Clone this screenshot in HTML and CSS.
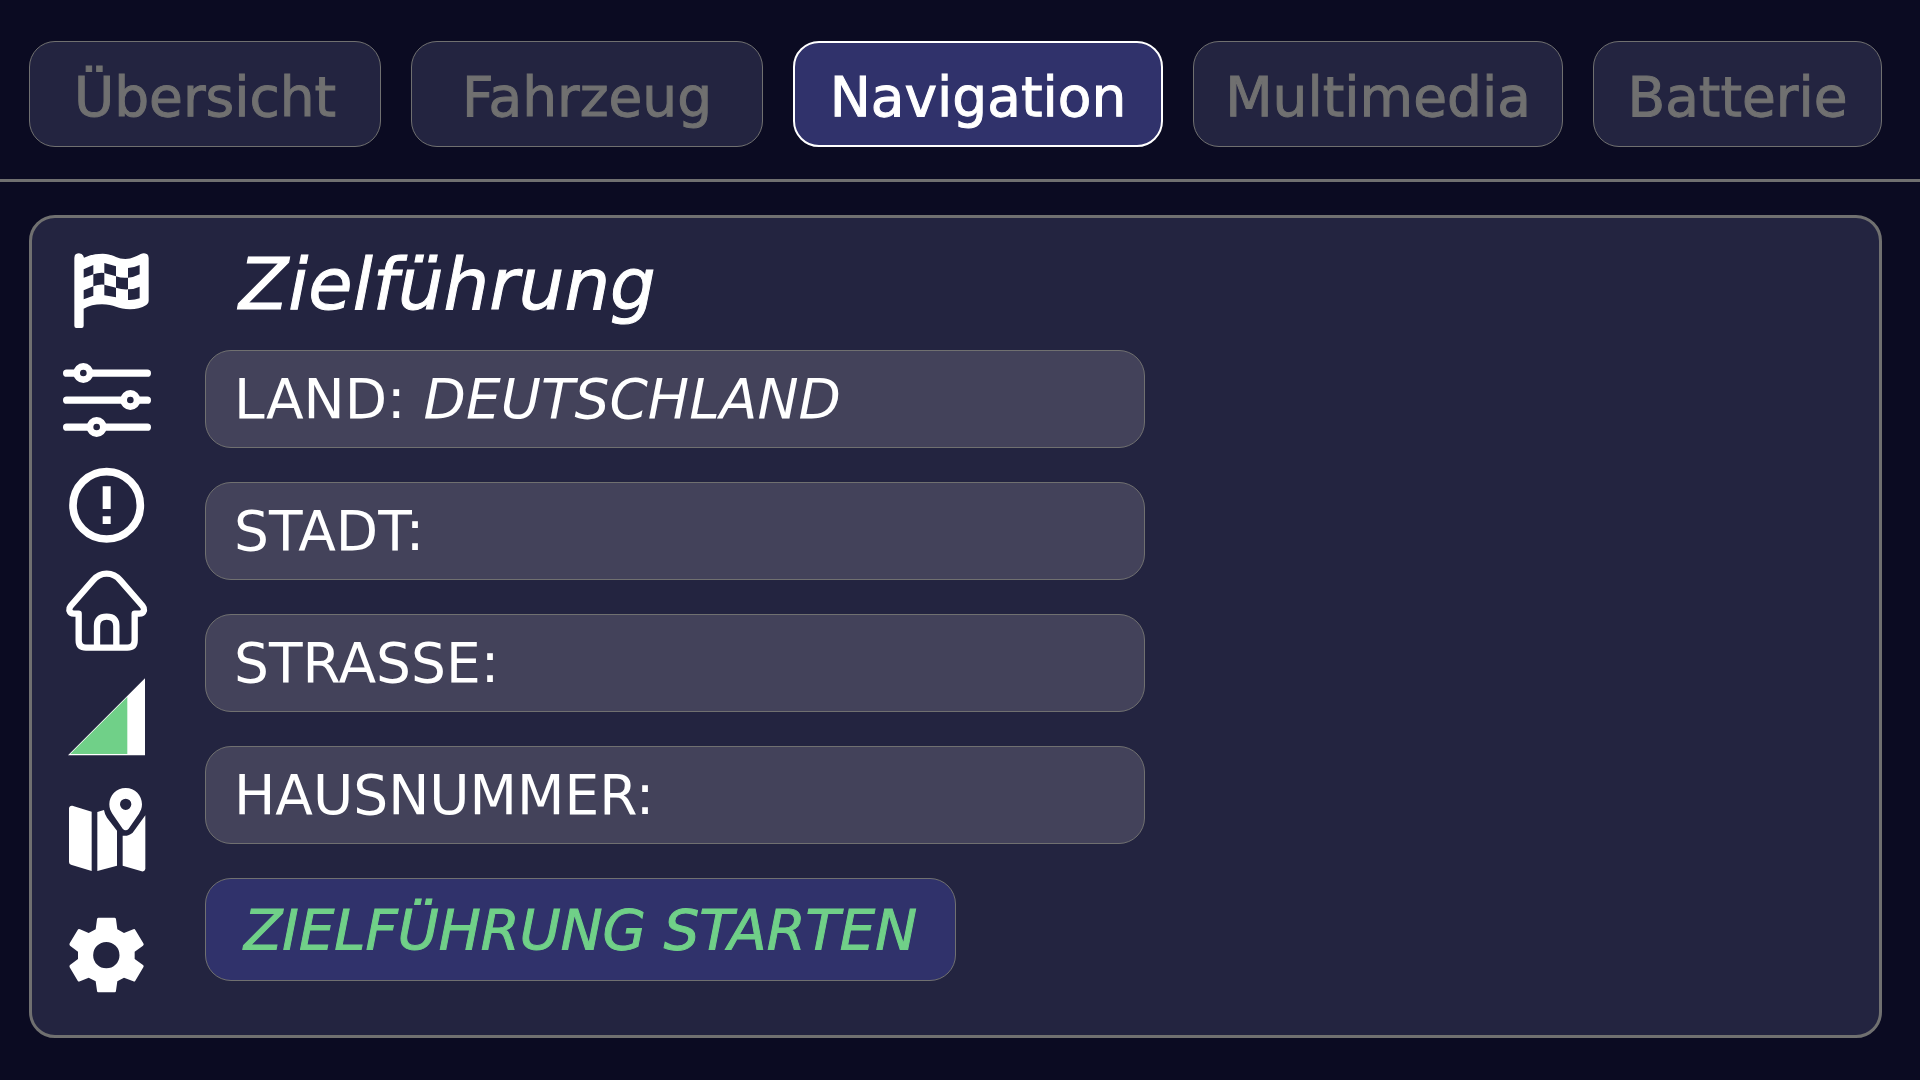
FILE: index.html
```html
<!DOCTYPE html>
<html lang="de">
<head>
<meta charset="utf-8">
<meta name="viewport" content="width=device-width, initial-scale=1">
<title>Navigation</title>
<link rel="stylesheet" href="styles.css">
</head>
<body>
<nav class="tabs" aria-label="Hauptmenü">
  <a class="tab" href="#uebersicht">Übersicht</a>
  <a class="tab" href="#fahrzeug">Fahrzeug</a>
  <a class="tab tab-active" href="#navigation" aria-current="page">Navigation</a>
  <a class="tab" href="#multimedia">Multimedia</a>
  <a class="tab" href="#batterie">Batterie</a>
</nav>
<main class="panel">
  <div class="tools">
    <button class="tool" type="button" aria-label="Ziel">
      <svg class="icon" viewBox="69 50 264 264" aria-hidden="true">
        <path d="M103 83q0-14 14-14 12 0 15 13 26-12 56-12c30 0 42 16 68 16 20 0 36-10 46-15q10-4 18 0 6 3 6 12v129q0 8-7 12-22 13-49 13c-36 0-48-15-84-15q-32 0-55 13v51q0 7-6 7h-16q-6 0-6-7z"/>
        <path class="cutout" d="M131 117l29-13v28l-29 10zM193 98l35 10v30l-35-10zM264 113q18-1 35-9v28q-17 9-35 10zM160 132q16-6 33-4v35q-16-2-33 5zM228 138q18 6 36 4v35q-18 1-36-5zM131 180l29-12v28l-29 11zM193 163l35 9v29l-35-6zM264 177q18 0 35-8v35q-17 6-35 5z"/>
      </svg>
    </button>
    <button class="tool" type="button" aria-label="Optionen">
      <svg class="icon" viewBox="69 378 264 264" aria-hidden="true">
        <path class="line bar" d="M80 429.500h242M80 510.500h242M80 591.500h242"/>
        <g class="knob"><circle cx="130" cy="429" r="20"/><circle cx="271" cy="510" r="20"/><circle cx="170" cy="591" r="20"/></g>
      </svg>
    </button>
    <button class="tool" type="button" aria-label="Warnungen">
      <svg class="icon" viewBox="69 36 264 264" aria-hidden="true">
        <circle class="line ring" cx="200" cy="166" r="101"/>
        <path d="M188 109h24v68h-24zM188 199h24v23h-24z"/>
      </svg>
    </button>
    <button class="tool" type="button" aria-label="Zuhause">
      <svg class="icon" viewBox="69 351 264 264" aria-hidden="true">
        <path class="line wall" d="M116 491h-14q-11 0-14-10-1-7 4-13l67-77q17-20 41-20t41 20l67 77q5 6 4 13-3 10-14 10h-14v80q0 22-22 22H138q-22 0-22-22z"/>
        <path class="line wall" d="M171 590v-62q0-28 29-28t29 28v62"/>
      </svg>
    </button>
    <button class="tool" type="button" aria-label="Empfang">
      <svg class="icon" viewBox="69 38 264 264" aria-hidden="true">
        <path d="M84 285L315 54v231z"/>
        <path class="signal" d="M91 281L262 110v171z"/>
      </svg>
    </button>
    <button class="tool" type="button" aria-label="Karte">
      <svg class="icon" viewBox="69 378 264 264" aria-hidden="true">
        <path d="M87 445q1-9 10-8l58 18v178l-62-19q-6-2-6-8zM172 456l20-6q2 13 9 23l30 39v105l-59 16zM248 527q18 2 30-9l38-52v161q-2 9-11 7l-57-17z"/>
        <path fill-rule="evenodd" d="M257 384c28 0 49 22 49 49 0 12-4 20-9 28l-31 45q-9 9-18 0l-31-45c-5-8-9-16-9-28 0-27 21-49 49-49zm0 32a17 17 0 1 0 0 34 17 17 0 0 0 0-34z"/>
      </svg>
    </button>
    <button class="tool" type="button" aria-label="Einstellungen">
      <svg class="icon" viewBox="69 752 264 264" aria-hidden="true">
        <path fill-rule="evenodd" d="M175 772h49q4 0 4 5l4 30 20 11 28-11q4-2 6 2l24 40q3 4-1 7l-25 18v22l25 18q4 3 1 7l-24 40q-2 4-6 2l-28-11-20 11-4 28q0 5-4 5h-49q-4 0-4-5l-4-28-21-11-26 11q-5 2-7-2l-24-40q-2-4 1-7l24-18v-22l-24-18q-3-3-1-7l24-40q2-4 7-2l26 11 21-11 4-30q0-5 4-5zM199 845a39.500 39.500 0 1 0 0 79 39.500 39.500 0 0 0 0-79z"/>
      </svg>
    </button>
  </div>
  <form class="route">
    <h1 class="title">Zielführung</h1>
    <div class="fields">
      <label class="field">LAND: <input class="value" type="text" name="land" value="DEUTSCHLAND"></label>
      <label class="field">STADT: <input class="value" type="text" name="stadt"></label>
      <label class="field">STRASSE: <input class="value" type="text" name="strasse"></label>
      <label class="field">HAUSNUMMER: <input class="value" type="text" name="hausnummer"></label>
      <button class="start" type="button">ZIELFÜHRUNG STARTEN</button>
    </div>
  </form>
</main>
</body>
</html>
```
FILE: styles.css
```css
:root {
  --page: #0b0b22;
  --surface: #232440;
  --field: #43425a;
  --active: #30326b;
  --muted: #707070;
  --green: #70d088;
  --radius: 26px;
}

* { box-sizing: border-box; }

body {
  margin: 0;
  min-height: 100vh;
  display: flex;
  flex-direction: column;
  background: var(--page);
  color: #fff;
  font-family: "DejaVu Sans", sans-serif;
  font-size: 55px;
  line-height: 64px;
}

.tabs {
  display: grid;
  grid-template-columns: 352fr 352fr 370fr 370fr 289fr;
  gap: 30px;
  padding: 41px 38px 32px 29px;
  border-bottom: 3px solid var(--muted);
}

.tab {
  display: flex;
  align-items: center;
  justify-content: center;
  height: 106px;
  padding-top: 6px;
  border: 1px solid var(--muted);
  border-radius: var(--radius);
  background: var(--surface);
  color: var(--muted);
  text-decoration: none;
  -webkit-text-stroke: 1px currentColor;
}

.tab-active {
  border: 2px solid #fff;
  background: var(--active);
  color: #fff;
}

.panel {
  flex: 1;
  display: grid;
  grid-template-columns: 88px 1fr;
  column-gap: 54px;
  margin: 33px 38px 42px 29px;
  padding: 0 31px;
  border: 3px solid var(--muted);
  border-radius: var(--radius);
  background: var(--surface);
}

.tools {
  display: grid;
  grid-template-rows: 111px 108px 103px 107px 105px 122px 127px;
  padding-top: 17px;
}

.tool {
  display: flex;
  align-items: center;
  justify-content: center;
  padding: 0;
  border: 0;
  background: none;
  color: #fff;
}

.icon { width: 88px; height: 88px; fill: currentColor; }
.cutout { fill: var(--surface); }
.signal { fill: var(--green); }
.line { fill: none; stroke: currentColor; stroke-linejoin: round; }
.bar { stroke-width: 22px; stroke-linecap: round; }
.ring { stroke-width: 23px; }
.wall { stroke-width: 19px; }
.knob { fill: var(--surface); stroke: currentColor; stroke-width: 20px; }

.route { max-width: 940px; }

.title {
  display: flex;
  align-items: center;
  height: 132px;
  margin: 0;
  padding-left: 34px;
  font-size: 72px;
  font-weight: 400;
  font-style: italic;
  -webkit-text-stroke: 1px currentColor;
}

.fields {
  display: flex;
  flex-direction: column;
  gap: 34px;
}

.field {
  display: flex;
  align-items: center;
  gap: 18px;
  height: 98px;
  padding: 0 28px;
  border: 1px solid var(--muted);
  border-radius: var(--radius);
  background: var(--field);
}

.value {
  flex: 1;
  min-width: 0;
  padding: 0;
  border: 0;
  outline: 0;
  background: none;
  color: inherit;
  font: inherit;
  font-style: italic;
}

.start {
  align-self: flex-start;
  height: 103px;
  padding: 0 38px;
  border: 1px solid var(--muted);
  border-radius: var(--radius);
  background: var(--active);
  color: var(--green);
  font: inherit;
  font-size: 56px;
  font-style: italic;
  -webkit-text-stroke: 1px currentColor;
}
```
